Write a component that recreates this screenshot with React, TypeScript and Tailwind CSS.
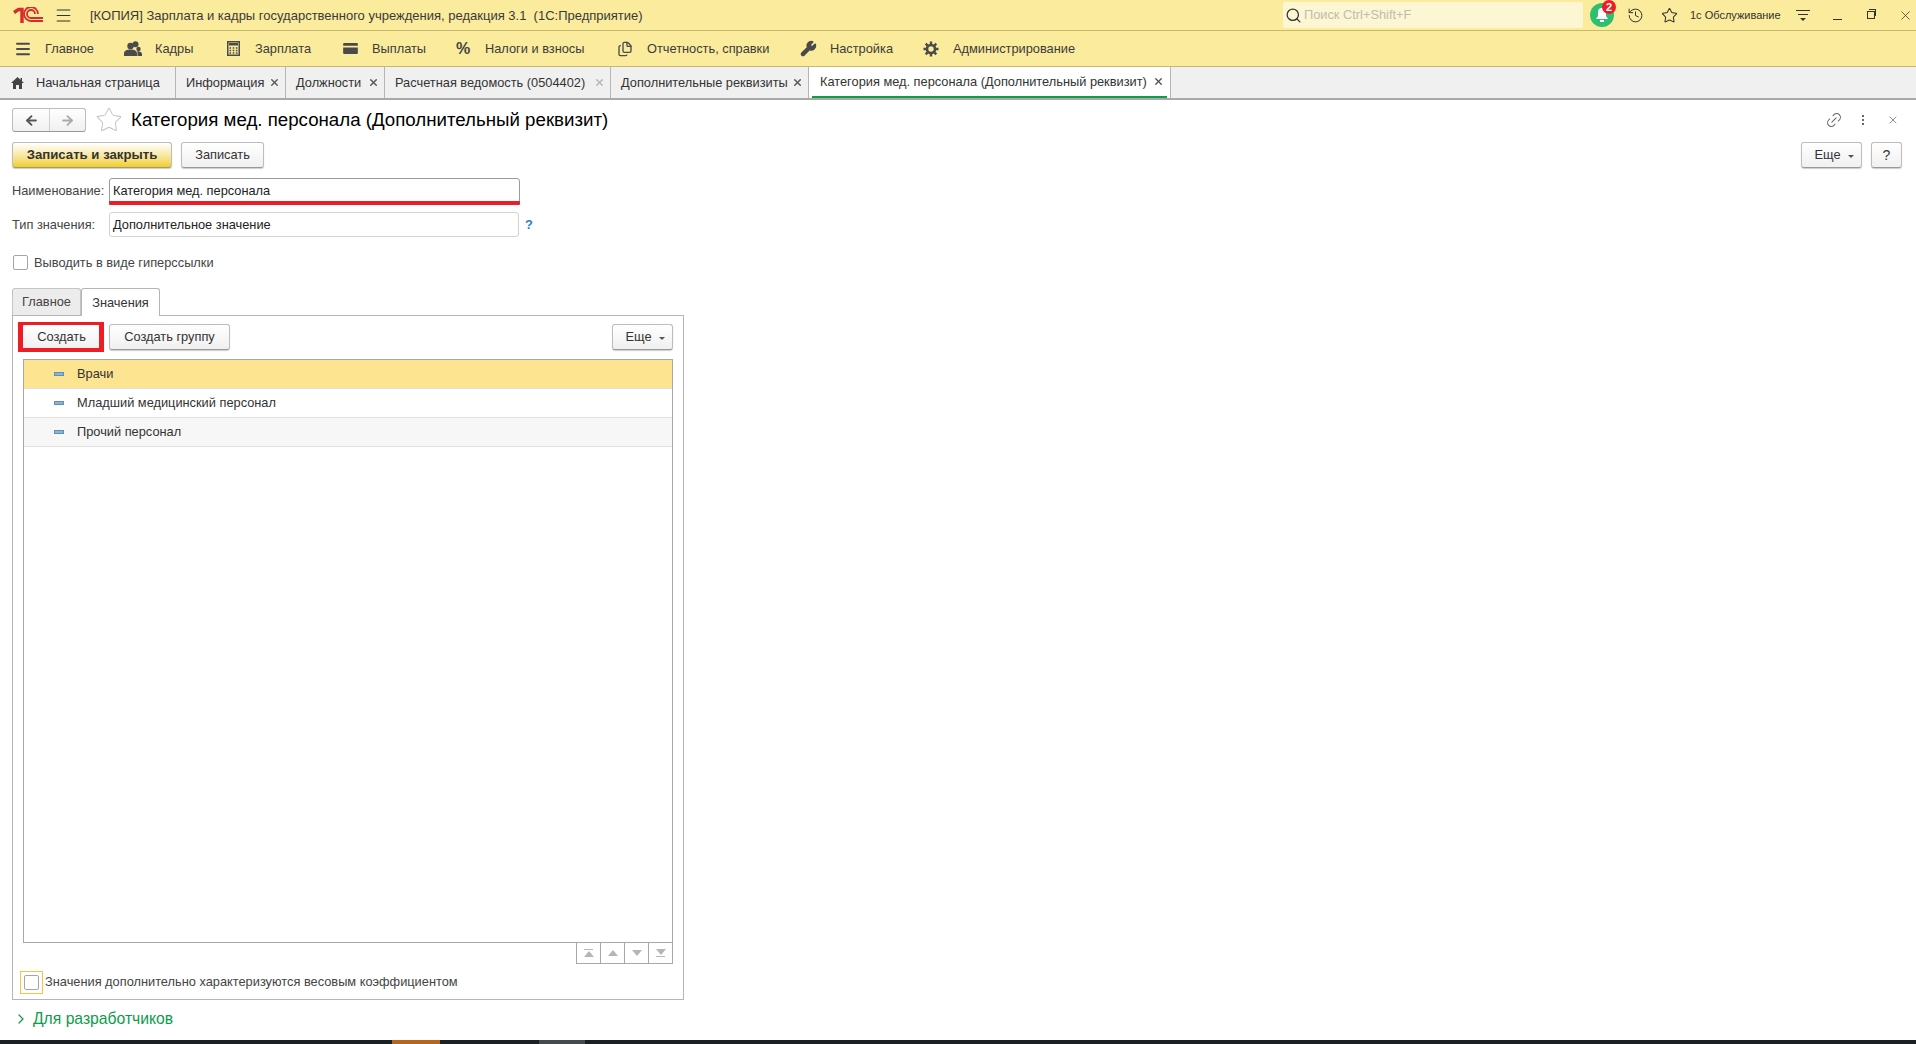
import React from 'react';
import { ArrowLeft, ArrowRight, ChevronRight, Files, History, Link2, Menu, Search, Star, Wrench, X } from 'lucide-react';

const menuItems = [
  { label: 'Главное', width: 'w-[110px]', icon: <Menu size={18} strokeWidth={2.6} /> },
  { label: 'Кадры', width: 'w-[100px]', icon: <PeopleIcon /> },
  { label: 'Зарплата', width: 'w-[117px]', icon: <CalcIcon /> },
  { label: 'Выплаты', width: 'w-[113px]', icon: <WalletIcon /> },
  { label: 'Налоги и взносы', width: 'w-[162px]', icon: <span className="text-[16px] font-bold text-[#444]">%</span> },
  { label: 'Отчетность, справки', width: 'w-[183px]', icon: <Files size={16} strokeWidth={2} /> },
  { label: 'Настройка', width: 'w-[123px]', icon: <Wrench size={17} fill="#4a4a4a" /> },
  { label: 'Администрирование', width: 'w-auto', icon: <GearIcon /> },
];

const tabs = [
  { label: 'Информация', width: 'w-[110px]' },
  { label: 'Должности', width: 'w-[99px]' },
  { label: 'Расчетная ведомость (0504402)', width: 'w-[226px]', muted: true },
  { label: 'Дополнительные реквизиты', width: 'w-[198px]' },
];

const rows = [
  { label: 'Врачи', bg: 'bg-[#fde491]' },
  { label: 'Младший медицинский персонал', bg: 'bg-white' },
  { label: 'Прочий персонал', bg: 'bg-[#f7f7f7]' },
];

function WalletIcon() {
  return (
    <svg width="15" height="11" viewBox="0 0 16 12">
      <path d="M1 0h14a1 1 0 0 1 1 1v2H0V1a1 1 0 0 1 1-1z" fill="#4a4a4a" />
      <path d="M0 5h16v6a1 1 0 0 1-1 1H1a1 1 0 0 1-1-1z" fill="#4a4a4a" />
    </svg>
  );
}

function PeopleIcon() {
  return (
    <svg width="18" height="16" viewBox="0 0 18 16" fill="#4a4a4a">
      <circle cx="6.5" cy="5" r="3.2" />
      <circle cx="11.5" cy="3.2" r="3" />
      <circle cx="14.5" cy="8" r="2.2" />
      <path d="M0 15v-2.5c0-2.5 2.5-4 6.5-4s6.5 1.5 6.5 4V15z" />
      <path d="M13.5 15v-3c0-.8-.2-1.3-.6-1.8 2.6-.3 5.1.7 5.1 2.8v2z" />
    </svg>
  );
}

function CalcIcon() {
  return (
    <svg width="13" height="15" viewBox="0 0 13 15" fill="none">
      <rect x="0.75" y="0.75" width="11.5" height="13.5" stroke="#4a4a4a" strokeWidth="1.5" />
      <rect x="2" y="2" width="9" height="2.5" fill="#4a4a4a" />
      <path d="M2.5 7h1.6M5.7 7h1.6M8.9 7h1.6M2.5 9.5h1.6M5.7 9.5h1.6M8.9 9.5h1.6M2.5 12h1.6M5.7 12h1.6M8.9 12h1.6" stroke="#4a4a4a" strokeWidth="1.4" />
    </svg>
  );
}

function GearIcon() {
  return (
    <svg width="16" height="16" viewBox="0 0 16 16" fill="none" stroke="#4a4a4a">
      <circle cx="8" cy="8" r="4" strokeWidth="2.6" />
      <path d="M8 0.5v3M8 12.5v3M0.5 8h3M12.5 8h3M2.7 2.7l2.1 2.1M11.2 11.2l2.1 2.1M13.3 2.7l-2.1 2.1M4.8 11.2l-2.1 2.1" strokeWidth="2.4" />
    </svg>
  );
}

function HomeIcon() {
  return (
    <svg width="13" height="12" viewBox="0 0 13 12" fill="#444">
      <path d="M6.5 0L13 6h-2v6H8V8H5v4H2V6H0z" />
      <rect x="9.5" y="1" width="1.5" height="3" />
    </svg>
  );
}

function Logo() {
  return (
    <svg width="30" height="16" viewBox="0 0 30 16" fill="none">
      <path d="M1 5.5l4.5-3h3.5v13.5" stroke="#d92b2b" strokeWidth="3.4" />
      <path d="M25 7a7 7 0 1 0-7 7h12" stroke="#d92b2b" strokeWidth="1.8" />
      <path d="M22 7a4 4 0 1 0-4 4h12" stroke="#d92b2b" strokeWidth="1.8" />
    </svg>
  );
}

function Btn({ children, className = '' }: { children: React.ReactNode; className?: string }) {
  return (
    <button className={`flex h-[26px] items-center justify-center rounded-[3px] border border-[#bdbdbd] border-b-[#999] bg-gradient-to-b from-white to-[#f0f0f0] text-[12.8px] text-[#333] shadow-[0_1px_1px_rgba(0,0,0,0.2)] ${className}`}>
      {children}
    </button>
  );
}

function MoreBtn({ className = '' }: { className?: string }) {
  return (
    <Btn className={`gap-[7px] pl-[5px] ${className}`}>
      Еще
      <span className="mt-[2px] h-0 w-0 border-x-[3px] border-t-[3px] border-x-transparent border-t-[#555]" />
    </Btn>
  );
}

function MoveButton({ up, stop }: { up: boolean; stop: boolean }) {
  return (
    <div className="flex w-[24px] flex-col items-center justify-center border-l border-[#a8a8a8]">
      {stop && up && <div className="mb-[1px] h-[1px] w-[9px] bg-[#b5b5b5]" />}
      <div className={`h-0 w-0 border-x-[5px] border-x-transparent ${up ? 'border-b-[6px] border-b-[#b5b5b5]' : 'border-t-[6px] border-t-[#b5b5b5]'}`} />
      {stop && !up && <div className="mt-[1px] h-[1px] w-[9px] bg-[#b5b5b5]" />}
    </div>
  );
}

export default function App() {
  return (
    <div className="relative flex h-[1044px] w-[1916px] flex-col overflow-hidden bg-white font-['Liberation_Sans',Arial,sans-serif] text-[12.8px] text-[#333]">
      {/* title bar */}
      <div className="flex h-[31px] items-center border-b border-[#c9b96b] bg-[#fbeb9c] pl-[13px]">
        <Logo />
        <Menu size={19} strokeWidth={1.4} className="ml-[11px] text-[#333]" />
        <span className="ml-[17px] pt-[1px] text-[13px] text-[#3a3a3a]">[КОПИЯ] Зарплата и кадры государственного учреждения, редакция 3.1&nbsp; (1С:Предприятие)</span>
        <div className="ml-auto flex h-[26px] w-[300px] items-center gap-[2px] rounded-[2px] bg-[#fdf6d3] pl-[2px] text-[12.8px] text-[#bdbdb0]">
          <Search size={17} strokeWidth={1.8} className="text-[#333]" />
          Поиск Ctrl+Shift+F
        </div>
        <div className="relative ml-[7px] flex h-[24px] w-[24px] items-center justify-center rounded-full bg-[#2fbf71]">
          <svg width="14" height="16" viewBox="0 0 14 16" fill="white">
            <path d="M7 1a4 4 0 0 0-4 4v4l-2 3h12l-2-3V5a4 4 0 0 0-4-4z" />
            <rect x="5" y="13" width="4" height="2" />
          </svg>
          <span className="absolute right-[-2px] top-[-3px] flex h-[14px] w-[14px] items-center justify-center rounded-full bg-[#ee1c25] text-[11px] font-bold text-white">2</span>
        </div>
        <History size={17} strokeWidth={1.4} className="ml-[13px] text-[#333]" />
        <Star size={17} strokeWidth={1.5} className="ml-[17px] text-[#333]" />
        <span className="ml-[12px] w-[92px] whitespace-nowrap text-[11px] text-[#333]">1с Обслуживание</span>
        <div className="ml-[14px] flex w-[14px] flex-col items-center gap-[3px]">
          <div className="h-[1px] w-[14px] bg-[#333]" />
          <div className="h-[1px] w-[10px] bg-[#333]" />
          <div className="h-0 w-0 border-x-[3px] border-t-[3px] border-x-transparent border-t-[#333]" />
        </div>
        <div className="ml-[23px] mt-[9px] h-[1px] w-[9px] bg-[#333]" />
        <div className="relative ml-[25px] h-[8px] w-[8px] border border-[#333]">
          <div className="absolute left-[1px] top-[-3px] h-[7px] w-[7px] border-r border-t border-[#333]" />
        </div>
        <X size={15} strokeWidth={1.2} className="ml-[23px] mr-[3px] text-[#333]" />
      </div>

      {/* section menu */}
      <div className="flex h-[36px] items-center border-b border-[#c9b96b] bg-[#fbeb9c] pl-[12px]">
        {menuItems.map((item) => (
          <div key={item.label} className={`flex items-center ${item.width}`}>
            <div className="flex w-[22px] items-center justify-center text-[#4a4a4a]">{item.icon}</div>
            <span className="ml-[11px] whitespace-nowrap pt-[1px] text-[#3c3c3c]">{item.label}</span>
          </div>
        ))}
      </div>

      {/* open tabs */}
      <div className="flex h-[33px] border-b-2 border-[#a9a9a9] bg-[#f0f0f0]">
        <div className="flex w-[176px] items-center border-r border-[#b5b5b5] pl-[11px]">
          <HomeIcon />
          <span className="ml-[12px] pt-[1px]">Начальная страница</span>
        </div>
        {tabs.map((tab) => (
          <div key={tab.label} className={`flex items-center justify-between border-r border-[#b5b5b5] pl-[10px] pr-[5px] ${tab.width}`}>
            <span className="whitespace-nowrap pt-[1px]">{tab.label}</span>
            <X size={11} strokeWidth={3} className={tab.muted ? 'text-[#b5b5b5]' : 'text-[#555]'} />
          </div>
        ))}
        <div className="flex w-[362px] flex-col border-r border-[#b5b5b5] bg-white">
          <div className="flex flex-1 items-center justify-between pl-[11px] pr-[6px]">
            <span className="whitespace-nowrap pt-[1px]">Категория мед. персонала (Дополнительный реквизит)</span>
            <X size={11} strokeWidth={3} className="text-[#555]" />
          </div>
          <div className="mx-[3px] h-[2px] bg-[#0f9d4a]" />
        </div>
      </div>

      {/* form */}
      <div className="flex flex-1 flex-col pl-[12px] pr-[14px] pt-[8px]">
        <div className="flex h-[24px] items-center">
          <div className="flex h-[24px] w-[74px] rounded-[3px] border border-[#bdbdbd] border-b-[#999] bg-gradient-to-b from-white to-[#f0f0f0]">
            <div className="flex w-[37px] items-center justify-center border-r border-[#cfcfcf] text-[#555]">
              <ArrowLeft size={15} strokeWidth={3} />
            </div>
            <div className="flex flex-1 items-center justify-center text-[#aaa]">
              <ArrowRight size={15} strokeWidth={3} />
            </div>
          </div>
          <Star size={28} strokeWidth={0.9} className="ml-[9px] text-[#c5c5c5]" />
          <span className="ml-[8px] whitespace-nowrap pt-[1px] text-[18.7px] text-black">Категория мед. персонала (Дополнительный реквизит)</span>
          <Link2 size={18} strokeWidth={1.4} className="ml-auto -rotate-45 text-[#666]" />
          <div className="ml-[19px] flex flex-col gap-[2px]">
            <div className="h-[2px] w-[2px] bg-[#666]" />
            <div className="h-[2px] w-[2px] bg-[#666]" />
            <div className="h-[2px] w-[2px] bg-[#666]" />
          </div>
          <X size={12} strokeWidth={1.5} className="ml-[23px] mr-[3px] text-[#666]" />
        </div>

        <div className="mt-[10px] flex items-center">
          <Btn className="w-[160px] border-[#b59e00] from-[#fde92e] to-[#f2cf00] text-[13.2px] font-bold">Записать и закрыть</Btn>
          <Btn className="ml-[9px] w-[83px]">Записать</Btn>
          <MoreBtn className="ml-auto w-[61px]" />
          <Btn className="ml-[9px] w-[31px] text-[14px]">?</Btn>
        </div>

        <div className="mt-[10px] flex h-[27px] items-center">
          <span className="w-[97px] pb-[2px] text-[#444]">Наименование:</span>
          <div className="relative flex h-[27px] w-[411px] items-start rounded-[3px] border border-[#9a9a9a] pl-[3px] pt-[2px] text-[#222]">
            Категория мед. персонала
            <div className="absolute bottom-[-1px] left-[-1px] right-[-1px] h-[4px] rounded-[1px] bg-[#ee1c25]" />
          </div>
        </div>

        <div className="mt-[7px] flex items-center">
          <span className="w-[97px] text-[#444]">Тип значения:</span>
          <div className="flex h-[25px] w-[410px] items-center rounded-[3px] border border-[#d2d2d2] pl-[3px] text-[#222]">Дополнительное значение</div>
          <span className="ml-[6px] font-bold text-[#1f7fc4]">?</span>
        </div>

        <div className="mt-[18px] flex h-[15px] items-center">
          <div className="ml-[1px] h-[15px] w-[15px] rounded-[2px] border border-[#a5a5a5]" />
          <span className="ml-[6px] text-[#444]">Выводить в виде гиперссылки</span>
        </div>

        {/* inner tabs */}
        <div className="mt-[18px] flex h-[27px]">
          <div className="flex w-[69px] items-center justify-center rounded-t-[3px] border border-b-0 border-[#c4c4c4] bg-[#ececec] text-[#444]">Главное</div>
          <div className="relative z-10 flex h-[28px] w-[79px] items-center justify-center rounded-t-[3px] border border-b-0 border-[#b5b5b5] bg-white">Значения</div>
        </div>
        <div className="flex h-[685px] w-[672px] flex-col border border-[#b5b5b5] px-[10px] pt-[8px]">
          <div className="flex h-[26px] items-center">
            <div className="relative ml-[-5px] flex w-[86px] justify-end">
              <Btn className="w-[82px] pr-[3px]">Создать</Btn>
              <div className="absolute inset-x-0 inset-y-[-2px] border-x-[5px] border-b-[4px] border-t-[3px] border-[#ee1c25]" />
            </div>
            <Btn className="ml-[5px] w-[121px]">Создать группу</Btn>
            <MoreBtn className="ml-auto w-[61px]" />
          </div>

          <div className="mt-[9px] flex h-[584px] flex-col border border-[#a8a8a8]">
            {rows.map((row) => (
              <div key={row.label} className={`flex h-[29px] items-center border-b border-[#e0e0e0] pl-[30px] ${row.bg}`}>
                <div className="h-[4px] w-[10px] border border-[#5f8fb5] bg-[#8ab4d4]" />
                <span className="ml-[13px] text-[#333]">{row.label}</span>
              </div>
            ))}
          </div>

          <div className="flex justify-end">
            <div className="flex h-[21px] border-b border-r border-[#a8a8a8]">
              <MoveButton up stop />
              <MoveButton up stop={false} />
              <MoveButton up={false} stop={false} />
              <MoveButton up={false} stop />
            </div>
          </div>

          <div className="mt-[7px] flex h-[23px] items-center">
            <div className="ml-[-3px] flex h-[23px] w-[23px] items-center justify-center border border-[#f5c542]">
              <div className="h-[15px] w-[15px] rounded-[2px] border border-[#a5a5a5]" />
            </div>
            <span className="ml-[2px] pb-[1px] text-[#444]">Значения дополнительно характеризуются весовым коэффициентом</span>
          </div>
        </div>

        <div className="mt-[9px] flex h-[20px] items-center text-[#0c9b4a]">
          <ChevronRight size={16} strokeWidth={1.8} className="ml-[1px]" />
          <span className="ml-[4px] text-[15.7px]">Для разработчиков</span>
        </div>
      </div>

      {/* taskbar strip cut off at the bottom of the shot */}
      <div className="flex h-[4px] bg-[#1b2024]">
        <div className="ml-[392px] w-[48px] bg-[#b5651d]" />
        <div className="ml-[99px] w-[46px] bg-[#444a4e]" />
      </div>
    </div>
  );
}
